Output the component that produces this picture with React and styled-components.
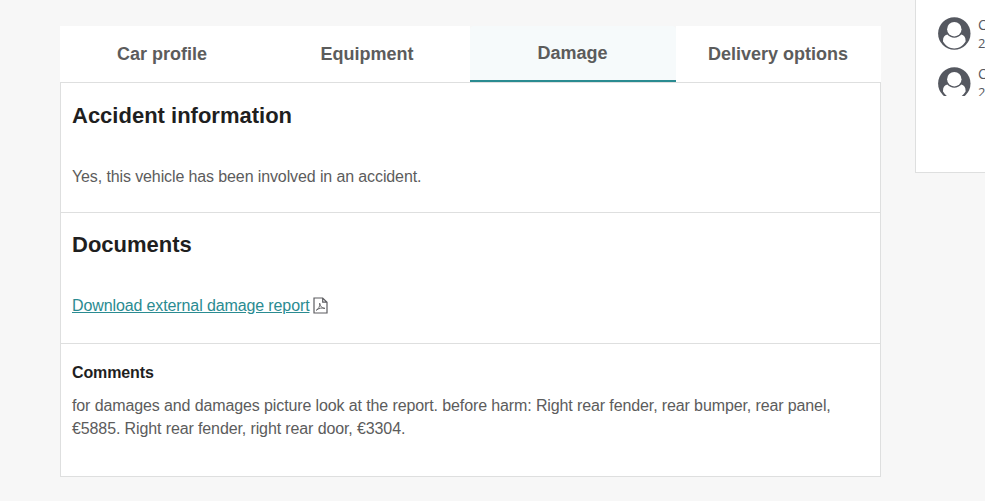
import React from "react";
import styled, { createGlobalStyle } from "styled-components";

const GlobalStyle = createGlobalStyle`
  * { box-sizing: border-box; }
  body { margin: 0; background: #f7f7f7; overflow: hidden; font-family: "Liberation Sans", Arial, sans-serif; }
`;

const Page = styled.div`
  display: grid;
  grid-template-columns: 821px 260px;
  column-gap: 34px;
  align-items: start;
  width: 985px;
  height: 501px;
  padding-left: 60px;
  overflow: hidden;
`;

const Main = styled.main`
  padding-top: 26px;
`;

const Tabs = styled.nav`
  display: grid;
  grid-template-columns: 205px 205px 206px 205px;
  height: 56px;
`;

const Tab = styled.button`
  margin: 0;
  padding: 0 1px 0 0;
  border: 0;
  border-bottom: ${(p) => (p.$active ? "2px solid #2a8b91" : "0")};
  border-radius: ${(p) => (p.$active ? "4px 4px 0 0" : "0")};
  background: ${(p) => (p.$active ? "#f6fafb" : "#fff")};
  color: #5c5c5c;
  font: bold 18px "Liberation Sans", Arial, sans-serif;
`;

const Panel = styled.div`
  border: 1px solid #dedfdf;
  background: #fff;
`;

const Section = styled.section`
  height: ${(p) => p.$height}px;
  padding: ${(p) => p.$top}px 11px 0;
  & + & { border-top: 1px solid #dedfdf; }
`;

const Title = styled.h2`
  margin: 0 0 35px;
  color: #1f1f1f;
  font-size: 22px;
  line-height: 28px;
`;

const Subtitle = styled.h3`
  margin: 0 0 10px;
  color: #1f1f1f;
  font-size: 16px;
  line-height: 23px;
  letter-spacing: -0.12px;
`;

const Text = styled.p`
  margin: 0;
  color: #5c5c5c;
  font-size: 16px;
  line-height: 23px;
  letter-spacing: -0.115px;
`;

const DownloadRow = styled.div`
  display: flex;
  align-items: center;
  gap: 4px;
  height: 23px;
`;

const Link = styled.a`
  color: #2a8b91;
  font-size: 16px;
  line-height: 23px;
  letter-spacing: -0.115px;
  text-decoration: underline;
`;

const Sidebar = styled.aside`
  height: 173px;
  border: 1px solid #dedfdf;
  border-top: 0;
  background: #fff;
`;

const PersonList = styled.div`
  display: flex;
  flex-direction: column;
  justify-content: flex-end;
  height: 96px;
  padding-left: 22px;
  overflow: hidden;
`;

const Person = styled.div`
  display: flex;
  flex: none;
  gap: 7px;
  height: 50px;
  &:last-child { height: 29px; }
`;

const PersonText = styled.div`
  margin-top: ${(p) => p.$shift}px;
  color: #555860;
  font: 14px/18px "Open Sans", sans-serif;
  white-space: nowrap;
`;

const PersonDetail = styled.div`
  font-size: 13px;
`;

function Avatar() {
  return (
    <svg width="33" height="33" viewBox="0 0 33 33">
      <circle cx="16.3" cy="16.5" r="16.2" fill="#555860" />
      <path d="M5 24.6C4.8 20.5 6.5 18.1 9.3 17.6C12.5 21.7 20.1 21.7 23.3 17.6C26.1 18.1 27.8 20.5 27.6 24.6C22.2 33.8 10.4 33.8 5 24.6Z" fill="#fff" />
      <circle cx="16.3" cy="12.2" r="7.2" fill="#fff" />
    </svg>
  );
}

function PdfIcon() {
  return (
    <svg width="15" height="17" viewBox="0 0 15 17" fill="none" stroke="#5c5c60" strokeWidth="1.2">
      <path d="M1 1H9.7L14 5.2V16H1ZM9.7 1V5.2H14" />
      <path d="M3.2 13.3C5.6 12 7.3 8.9 6.7 6.2C7 9 8.8 11.4 12 11.4C8.8 10.5 5.8 11.2 3.2 13.3Z" strokeWidth="0.9" />
    </svg>
  );
}

const tabs = ["Car profile", "Equipment", "Damage", "Delivery options"];

export default function App() {
  return (
    <Page>
      <GlobalStyle />
      <Main>
        <Tabs>
          {tabs.map((name) => (
            <Tab key={name} $active={name === "Damage"}>{name}</Tab>
          ))}
        </Tabs>
        <Panel>
          <Section $height={129} $top={19}>
            <Title>Accident information</Title>
            <Text>Yes, this vehicle has been involved in an accident.</Text>
          </Section>
          <Section $height={131} $top={18}>
            <Title>Documents</Title>
            <DownloadRow>
              <Link href="#">Download external damage report</Link>
              <PdfIcon />
            </DownloadRow>
          </Section>
          <Section $height={133} $top={17}>
            <Subtitle>Comments</Subtitle>
            <Text>
              for damages and damages picture look at the report. before harm: Right rear fender, rear bumper, rear panel, €5885. Right rear fender, right rear door, €3304.
            </Text>
          </Section>
        </Panel>
      </Main>
      <Sidebar>
        <PersonList>
          <Person>
            <Avatar />
          </Person>
          {[-1, -2].map((shift) => (
            <Person key={shift}>
              <Avatar />
              <PersonText $shift={shift}>
                C
                <PersonDetail>2</PersonDetail>
              </PersonText>
            </Person>
          ))}
        </PersonList>
      </Sidebar>
    </Page>
  );
}
